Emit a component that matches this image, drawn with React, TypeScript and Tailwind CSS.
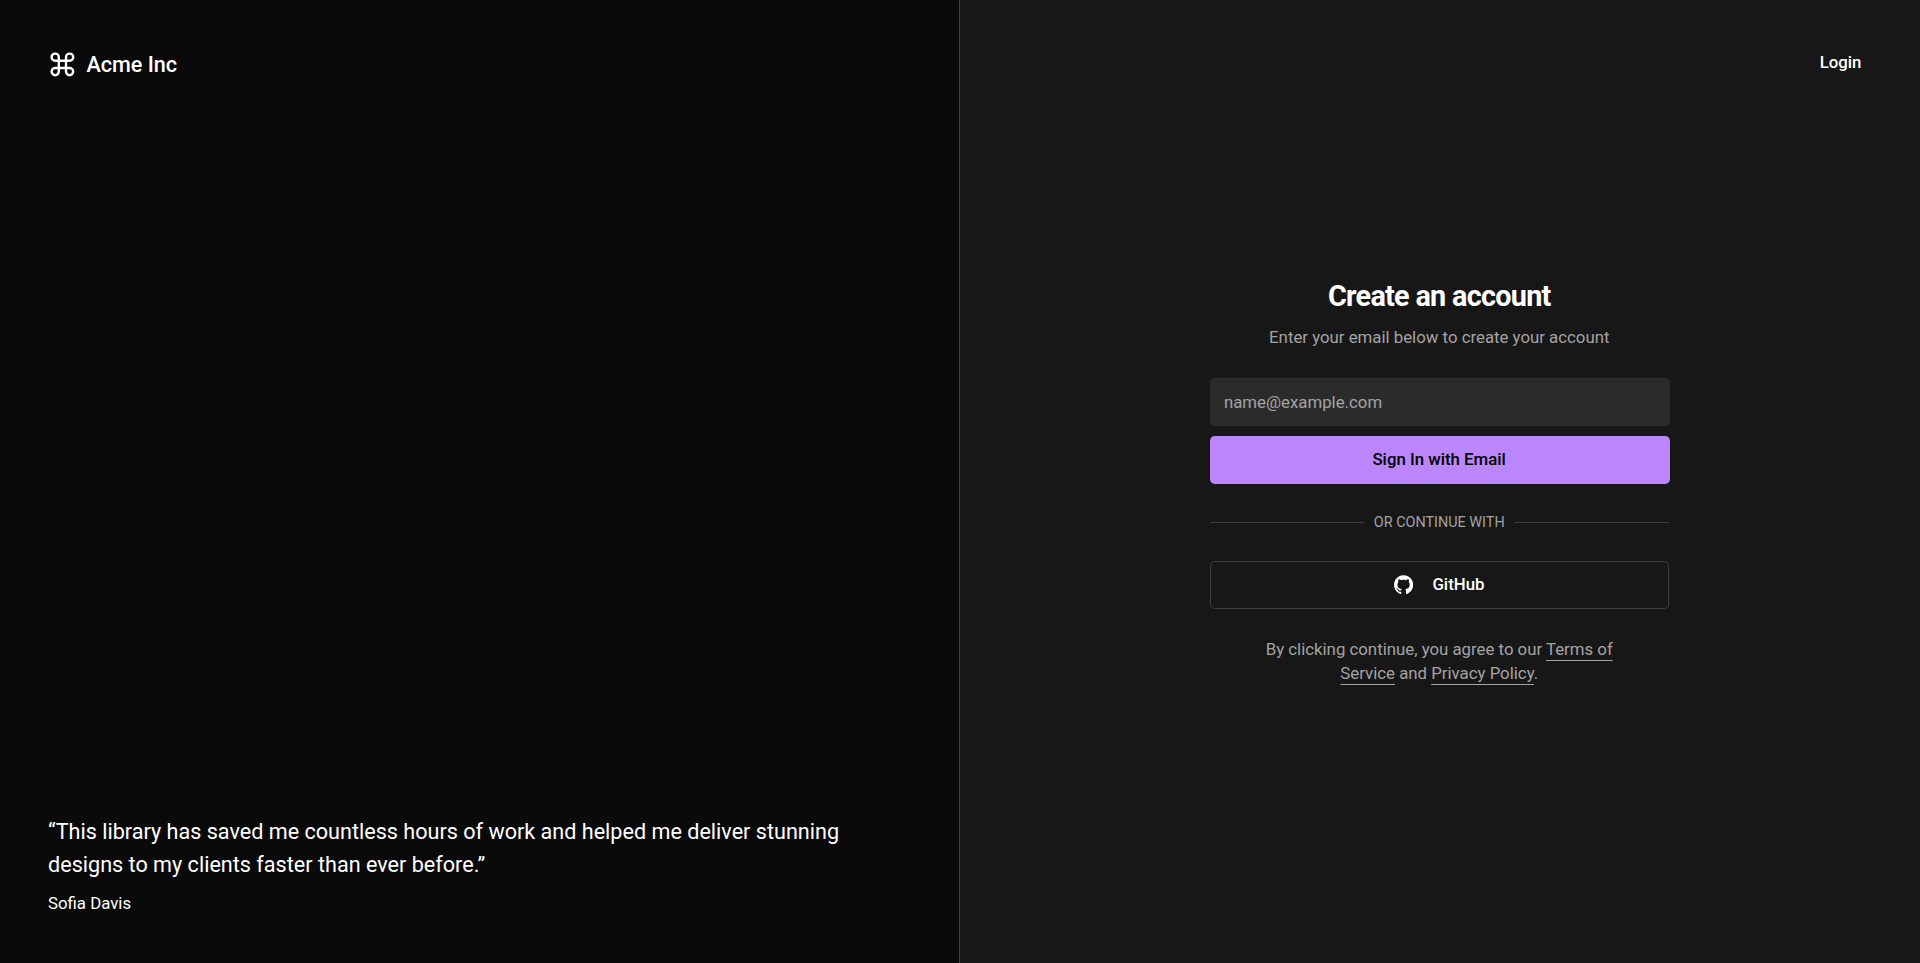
import React from "react";

function CommandIcon() {
  return (
    <svg
      xmlns="http://www.w3.org/2000/svg"
      viewBox="0 0 24 24"
      fill="none"
      stroke="currentColor"
      strokeWidth="2"
      strokeLinecap="round"
      strokeLinejoin="round"
      className="mr-2 h-6 w-6"
    >
      <path d="M15 6v12a3 3 0 1 0 3-3H6a3 3 0 1 0 3 3V6a3 3 0 1 0-3 3h12a3 3 0 1 0-3-3" />
    </svg>
  );
}

function GitHubIcon() {
  return (
    <svg viewBox="0 0 438.549 438.549" className="mr-4 h-4 w-4">
      <path
        fill="currentColor"
        d="M409.132 114.573c-19.608-33.596-46.205-60.194-79.798-79.8-33.598-19.607-70.277-29.408-110.063-29.408-39.781 0-76.472 9.804-110.063 29.408-33.596 19.605-60.192 46.204-79.8 79.8C9.803 148.168 0 184.854 0 224.63c0 47.78 13.94 90.745 41.827 128.906 27.884 38.164 63.906 64.572 108.063 79.227 5.14.954 8.945.283 11.419-1.996 2.475-2.282 3.711-5.14 3.711-8.562 0-.571-.049-5.708-.144-15.417a2549.81 2549.81 0 01-.144-25.406l-6.567 1.136c-4.187.767-9.469 1.092-15.846 1-6.374-.089-12.991-.757-19.842-1.999-6.854-1.231-13.229-4.086-19.13-8.559-5.898-4.473-10.085-10.328-12.56-17.556l-2.855-6.57c-1.903-4.374-4.899-9.233-8.992-14.559-4.093-5.331-8.232-8.945-12.419-10.848l-1.999-1.431c-1.332-.951-2.568-2.098-3.711-3.429-1.142-1.331-1.997-2.663-2.568-3.997-.572-1.335-.098-2.43 1.427-3.289 1.525-.859 4.281-1.276 8.28-1.276l5.708.853c3.807.763 8.516 3.042 14.133 6.851 5.614 3.806 10.229 8.754 13.846 14.842 4.38 7.806 9.657 13.754 15.846 17.847 6.184 4.093 12.419 6.136 18.699 6.136 6.28 0 11.704-.476 16.274-1.423 4.565-.952 8.848-2.383 12.847-4.285 1.713-12.758 6.377-22.559 13.988-29.41-10.848-1.14-20.601-2.857-29.264-5.14-8.658-2.286-17.605-5.996-26.835-11.14-9.235-5.137-16.896-11.516-22.985-19.126-6.09-7.614-11.088-17.61-14.987-29.979-3.901-12.374-5.852-26.648-5.852-42.826 0-23.035 7.52-42.637 22.557-58.817-7.044-17.318-6.379-36.732 1.997-58.24 5.52-1.715 13.706-.428 24.554 3.853 10.85 4.283 18.794 7.952 23.84 10.994 5.046 3.041 9.089 5.618 12.135 7.708 17.705-4.947 35.976-7.421 54.818-7.421s37.117 2.474 54.823 7.421l10.849-6.849c7.419-4.57 16.18-8.758 26.262-12.565 10.088-3.805 17.802-4.853 23.134-3.138 8.562 21.509 9.325 40.922 2.279 58.24 15.036 16.18 22.559 35.787 22.559 58.817 0 16.178-1.958 30.497-5.853 42.966-3.9 12.471-8.941 22.457-15.125 29.979-6.191 7.521-13.901 13.85-23.131 18.986-9.232 5.14-18.182 8.85-26.84 11.136-8.662 2.286-18.415 4.004-29.263 5.146 9.894 8.562 14.842 22.077 14.842 40.539v60.237c0 3.422 1.19 6.279 3.572 8.562 2.379 2.279 6.136 2.95 11.276 1.995 44.163-14.653 80.185-41.062 108.068-79.226 27.88-38.161 41.825-81.126 41.825-128.906-.01-39.771-9.818-76.454-29.414-110.049z"
      />
    </svg>
  );
}

function Showcase() {
  return (
    <section className="flex flex-col justify-between border-r border-[#3f3f3f] bg-[#0a0a0a] p-10 pb-[39.6px]">
      <div className="flex items-center text-lg font-medium">
        <CommandIcon />
        Acme Inc
      </div>
      <blockquote className="space-y-2">
        <p className="text-lg">
          &ldquo;This library has saved me countless hours of work and helped me
          deliver stunning designs to my clients faster than ever before.&rdquo;
        </p>
        <footer className="text-sm">Sofia Davis</footer>
      </blockquote>
    </section>
  );
}

function SignUpForm() {
  return (
    <div className="flex w-[382.5px] flex-col gap-6">
      <div className="flex flex-col gap-2 text-center">
        <h1 className="-mt-[0.8px] mb-[0.8px] text-2xl font-bold tracking-tight">
          Create an account
        </h1>
        <p className="text-sm text-[#a3a3a3]">
          Enter your email below to create your account
        </p>
      </div>
      <form className="grid w-[383.3px] gap-2">
        <input
          type="email"
          placeholder="name@example.com"
          className="h-10 w-full rounded border border-[#2f2f2f] bg-[#2b2b2b] px-[11px] text-sm placeholder:text-[#a3a3a3]"
        />
        <button
          type="button"
          className="h-10 rounded bg-[#bb86fc] pr-px text-sm font-medium text-black"
        >
          Sign In with Email
        </button>
      </form>
      <div className="flex items-center gap-2 text-xs text-[#a3a3a3] uppercase">
        <span className="flex-1 border-t border-[#3f3f3f]" />
        Or continue with
        <span className="flex-1 border-t border-[#3f3f3f]" />
      </div>
      <button
        type="button"
        className="flex h-10 items-center justify-center rounded border border-[#3f3f3f] text-sm font-medium"
      >
        <GitHubIcon />
        GitHub
      </button>
      <p className="mt-[0.4px] -mb-[0.4px] px-8 text-center text-sm text-[#a3a3a3]">
        By clicking continue, you agree to our{" "}
        <a href="#terms" className="underline underline-offset-4">
          Terms of Service
        </a>{" "}
        and{" "}
        <a href="#privacy" className="underline underline-offset-4">
          Privacy Policy
        </a>
        .
      </p>
    </div>
  );
}

export default function App() {
  return (
    <div className="bg-[#171717]">
      <main className="grid h-[802.5px] w-[1599.17px] grid-cols-2 overflow-hidden bg-[#171717] font-['Roboto',sans-serif] text-white [zoom:1.2]">
        <Showcase />
        <section className="relative flex items-center justify-center">
          <a
            href="#login"
            className="absolute top-[32.5px] right-8 inline-flex h-10 items-center px-4 text-sm font-medium"
          >
            Login
          </a>
          <SignUpForm />
        </section>
      </main>
    </div>
  );
}
